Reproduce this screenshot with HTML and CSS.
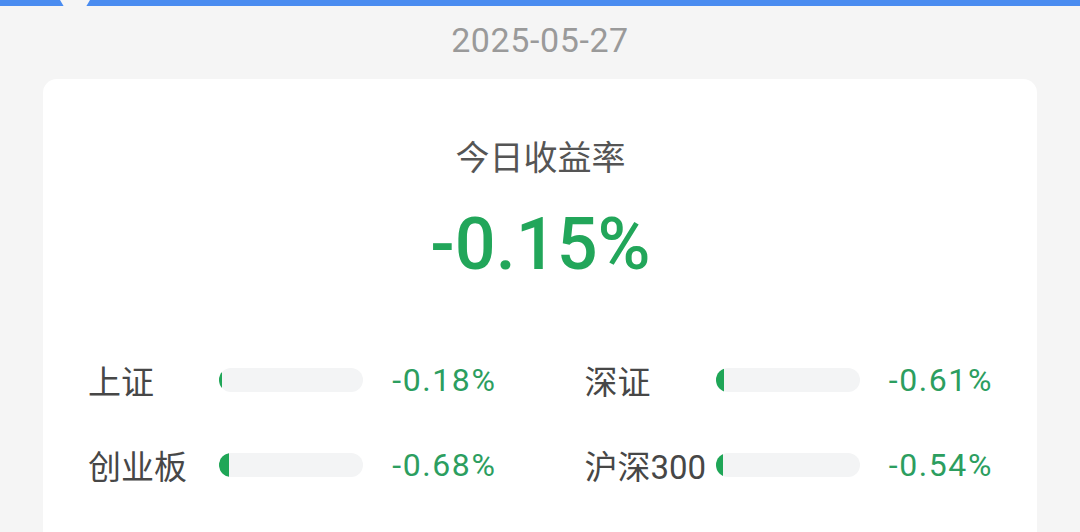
FILE: index.html
```html
<!DOCTYPE html>
<html lang="zh-CN">
<head>
<meta charset="utf-8">
<title>今日收益率</title>
<link rel="stylesheet" href="styles.css">
</head>
<body>
<div class="topbar"><span class="notch"></span></div>
<div class="date">2025-05-27</div>
<section class="card">
  <div class="title">今日收益率</div>
  <div class="total">-0.15%</div>
  <div class="grid">
    <div class="row">
      <span class="label">上证</span>
      <span class="bar"><span class="fill" style="width:1.8%"></span></span>
      <span class="pct">-0.18%</span>
    </div>
    <div class="row">
      <span class="label">深证</span>
      <span class="bar"><span class="fill" style="width:6.1%"></span></span>
      <span class="pct">-0.61%</span>
    </div>
    <div class="row">
      <span class="label">创业板</span>
      <span class="bar"><span class="fill" style="width:6.8%"></span></span>
      <span class="pct">-0.68%</span>
    </div>
    <div class="row">
      <span class="label">沪深300</span>
      <span class="bar"><span class="fill" style="width:5.4%"></span></span>
      <span class="pct">-0.54%</span>
    </div>
  </div>
</section>
</body>
</html>
```
FILE: styles.css
```css
* { box-sizing: border-box; }
html, body { margin: 0; padding: 0; }
body {
  background: #f5f5f5;
  font-family: Roboto, "Noto Sans CJK SC", sans-serif;
  width: 1080px;
  height: 532px;
  overflow: hidden;
}
.topbar {
  position: relative;
  height: 6px;
  background: #4a8cf0;
}
.notch {
  position: absolute;
  left: 60px;
  top: 0;
  width: 30px;
  height: 6px;
  background: #f5f5f5;
  clip-path: polygon(0 0, 100% 0, 88% 100%, 12% 100%);
}
.date {
  margin-top: 14px;
  height: 40px;
  line-height: 40px;
  text-align: center;
  font-size: 34px;
  letter-spacing: 0.6px;
  color: #9a9a9a;
}
.card {
  margin: 19px 43px 0;
  background: #fff;
  border-radius: 14px;
  padding: 59px 44px 60px 45px;
}
.title {
  height: 40px;
  line-height: 40px;
  text-align: center;
  font-size: 34px;
  color: #555;
}
.total {
  margin-top: 27px;
  height: 80px;
  line-height: 80px;
  text-align: center;
  font-size: 72px;
  font-weight: 500;
  color: #22a65a;
}
.grid {
  margin-top: 70px;
  display: grid;
  grid-template-columns: 1fr 1fr;
  column-gap: 88px;
  row-gap: 35px;
}
.row {
  display: grid;
  grid-template-columns: 131px 144px 1fr;
  align-items: center;
  height: 50px;
}
.label {
  font-size: 33px;
  color: #474747;
  white-space: nowrap;
}
.bar {
  display: block;
  height: 24px;
  border-radius: 12px;
  background: #f3f4f5;
  overflow: hidden;
}
.fill {
  display: block;
  height: 100%;
  background: #1fa657;
  border-radius: 12px 0 0 12px;
}
.pct {
  text-align: right;
  font-size: 32px;
  letter-spacing: 1.6px;
  color: #2c9e5f;
}
```
